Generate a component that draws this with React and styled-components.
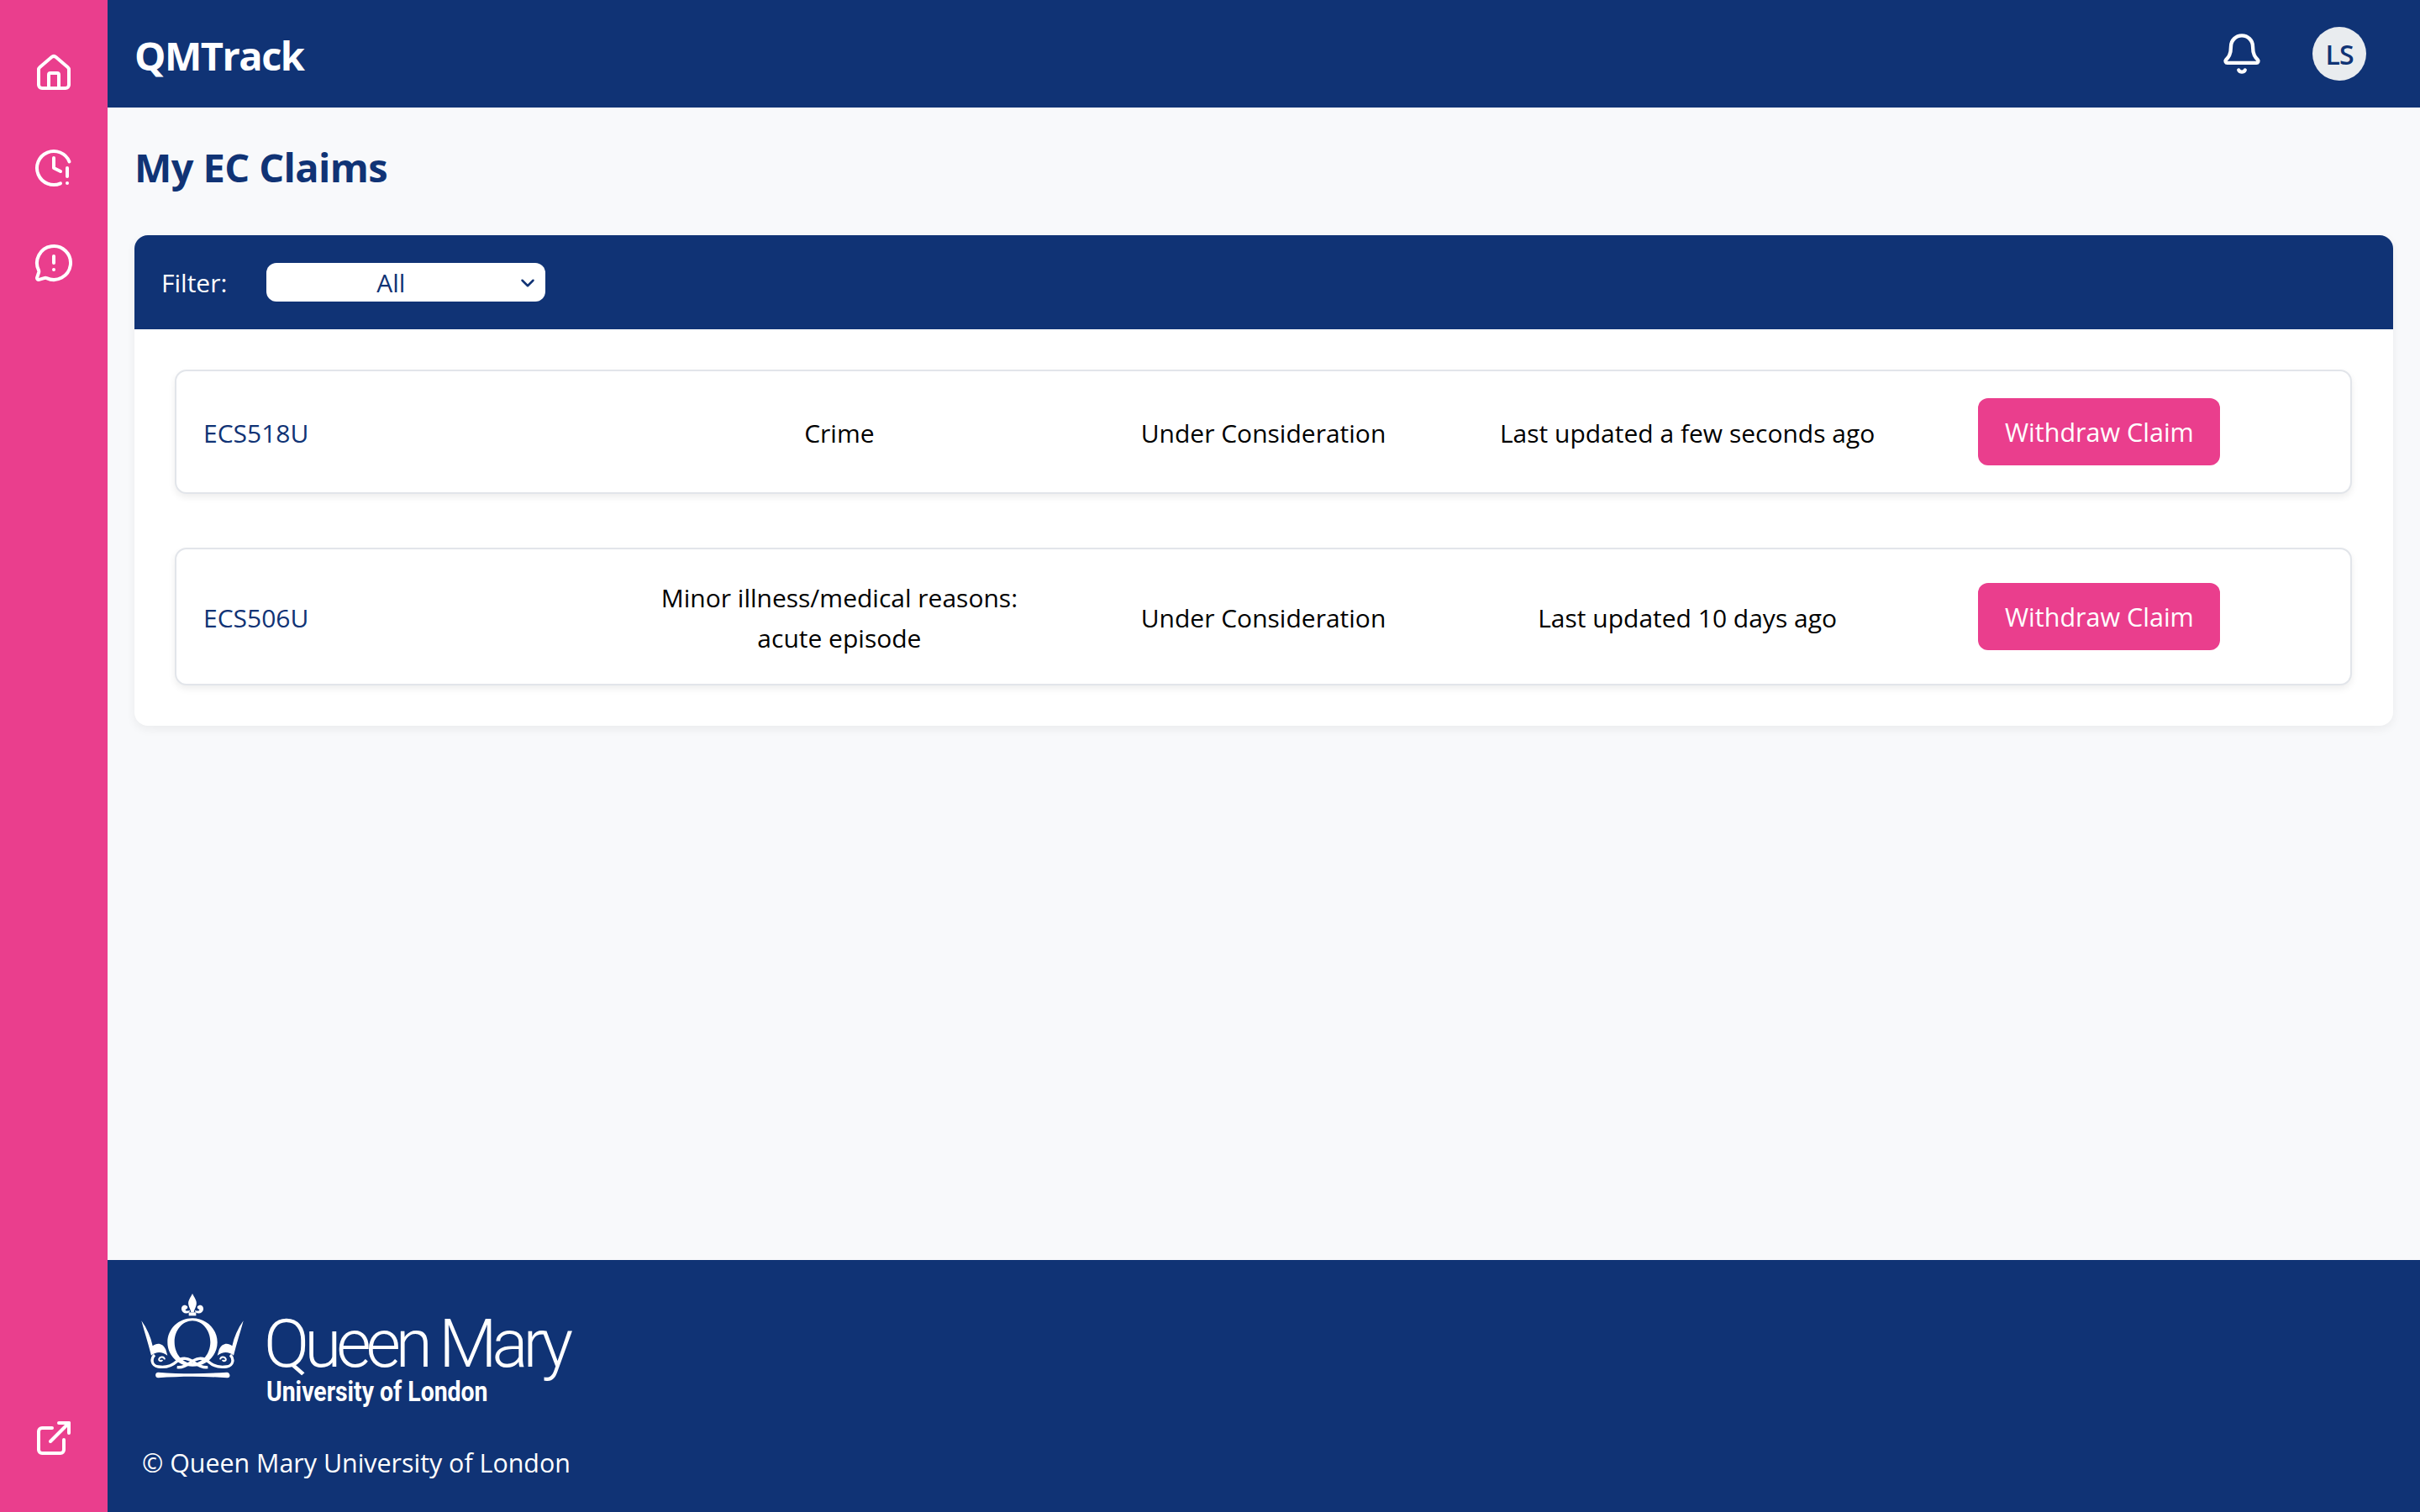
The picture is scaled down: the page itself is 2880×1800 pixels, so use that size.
import React from 'react';
import styled, { createGlobalStyle } from 'styled-components';
import { Bell, ChevronDown, ClockAlert, ExternalLink, House, MessageCircleWarning } from 'lucide-react';

const navy = '#103375';
const pink = '#ea3e8d';
const uiFont = '"Open Sans", "Noto Sans", sans-serif';

const GlobalStyle = createGlobalStyle`
  html, body {
    margin: 0;
    height: 100%;
    background: #f8f9fb;
    font-family: ${uiFont};
  }
  * { box-sizing: border-box; }
`;

const Shell = styled.div`
  display: grid;
  grid-template-columns: 128px 1fr;
  height: 100vh;
`;

const Sidebar = styled.nav`
  display: flex;
  flex-direction: column;
  align-items: center;
  justify-content: space-between;
  padding: 63px 0 64px;
  background: ${pink};
  color: #fff;
`;

const NavGroup = styled.div`
  display: flex;
  flex-direction: column;
  gap: 65px;
`;

const Column = styled.div`
  display: flex;
  flex-direction: column;
  min-width: 0;
`;

const Header = styled.header`
  display: flex;
  align-items: center;
  justify-content: space-between;
  height: 128px;
  padding: 0 64px 0 32px;
  background: ${navy};
  color: #fff;
`;

const Brand = styled.div`
  padding-top: 3px;
  font-size: 47px;
  font-weight: 700;
  letter-spacing: -1.5px;
`;

const HeaderActions = styled.div`
  display: flex;
  align-items: center;
  gap: 58px;
`;

const Avatar = styled.div`
  display: flex;
  align-items: center;
  justify-content: center;
  width: 64px;
  height: 64px;
  border-radius: 50%;
  background: #e9ecef;
  color: ${navy};
  font-size: 32px;
  font-weight: 600;
  letter-spacing: -1px;
`;

const Main = styled.main`
  flex: 1;
  padding: 35px 32px 0;
`;

const Title = styled.h1`
  margin: 0 0 45px;
  color: ${navy};
  font-size: 47px;
  line-height: 72px;
  font-weight: 700;
  letter-spacing: -0.6px;
`;

const Card = styled.section`
  border-radius: 16px;
  background: #fff;
  box-shadow: 0 4px 12px rgba(0, 0, 0, 0.06);
  overflow: hidden;
`;

const FilterBar = styled.div`
  display: flex;
  align-items: center;
  gap: 47px;
  height: 112px;
  padding: 0 32px;
  background: ${navy};
  color: #fff;
  font-size: 30px;
`;

const SelectWrap = styled.div`
  position: relative;
  width: 332px;
  height: 46px;
  color: ${navy};
`;

const Select = styled.select`
  appearance: none;
  width: 100%;
  height: 100%;
  padding: 0 36px 0 0;
  border: 0;
  border-radius: 12px;
  background: #fff;
  color: ${navy};
  font-family: ${uiFont};
  font-size: 30px;
  text-align: center;
`;

const Chevron = styled(ChevronDown)`
  position: absolute;
  top: 11px;
  right: 8px;
  pointer-events: none;
`;

const ClaimList = styled.div`
  display: flex;
  flex-direction: column;
  gap: 64px;
  padding: 48px 49px 48px 48px;
`;

const ClaimRow = styled.article`
  display: grid;
  grid-template-columns: repeat(5, 1fr);
  align-items: center;
  padding: 32px;
  border: 2px solid #e2e5ea;
  border-radius: 14px;
  background: #fff;
  box-shadow: 0 4px 8px rgba(0, 0, 0, 0.07);
  font-size: 30px;
  line-height: 48px;
`;

const Code = styled.div`
  margin-bottom: -2px;
  padding-top: 2px;
  color: ${navy};
`;

const Cell = styled.div`
  margin-bottom: -2px;
  padding: 2px 16px 0;
  color: #000;
  text-align: center;
`;

const WithdrawButton = styled.button`
  width: 288px;
  height: 80px;
  margin-left: 94px;
  padding: 0;
  border: 0;
  border-radius: 12px;
  background: ${pink};
  color: #fff;
  font-family: ${uiFont};
  font-size: 30.5px;
`;

const Footer = styled.footer`
  display: flex;
  flex-direction: column;
  height: 300px;
  padding: 35px 32px 0;
  background: ${navy};
  color: #fff;
`;

const Logo = styled.div`
  display: flex;
  gap: 14px;
  height: 182px;
`;

const Wordmark = styled.div`
  display: flex;
  flex-direction: column;
`;

const WordmarkName = styled.div`
  margin-top: 26px;
  font-family: Roboto, "Liberation Sans", sans-serif;
  font-size: 80px;
  font-weight: 300;
  line-height: 78px;
  letter-spacing: -6px;
  white-space: nowrap;
`;

const WordmarkPlace = styled.div`
  margin: 2px 0 0 3px;
  font-family: Roboto, "Liberation Sans", sans-serif;
  font-size: 33px;
  font-weight: 700;
  line-height: 32px;
  white-space: nowrap;
  transform: scaleX(0.86);
  transform-origin: left center;
`;

const Copyright = styled.div`
  margin: 1px 0 0 9px;
  font-size: 30.4px;
  line-height: 48px;
`;

const CrownSide = () => (
  <>
    <path d="M190 62C180 50 166 58 168 72c2 12 16 18 28 10l2-8c-8 4-16 4-16-2 4-2 8-4 8-10z" />
    <path d="M25 112c20 28 33 58 40 90 15-12 35-12 47 13l6 21c-18-14-40-16-58 0C50 195 35 150 25 112z" />
    <path d="M72 234c-14 14-12 38 13 42 27 4 50-4 65-18 20-18 45-13 65 4 13 10 30 18 47 16" fill="none" stroke="#fff" strokeWidth="10" />
    <path d="M108 250c-2-10-16-12-20-2-2 8 8 10 12 4" fill="none" stroke="#fff" strokeWidth="6" />
  </>
);

const Crown = () => (
  <svg width="140" height="112" viewBox="0 0 420 336" fill="#fff">
    <path d="M207 15c7 15 17 25 14 40-2 11-8 17-9 27h-10c-1-10-7-16-9-27-3-15 7-25 14-40z" />
    <rect x="194" y="82" width="26" height="12" />
    <path
      fillRule="evenodd"
      d="M207 103c49 0 89 38 89 86s-40 86-89 86-89-38-89-86 40-86 89-86zM207 112c-35 0-64 34-64 76s29 76 64 76 64-34 64-76-29-76-64-76z"
    />
    <CrownSide />
    <g transform="matrix(-1 0 0 1 414 0)">
      <CrownSide />
    </g>
    <path d="M85 296c80 6 165 6 245 0 12 0 15 20 2 20-82-6-167-6-247 0-13 0-13-20 0-20z" />
  </svg>
);

const claims = [
  { code: 'ECS518U', reason: 'Crime', updated: 'Last updated a few seconds ago' },
  { code: 'ECS506U', reason: 'Minor illness/medical reasons: acute episode', updated: 'Last updated 10 days ago' },
];

const App = () => {
  return (
    <Shell>
      <GlobalStyle />
      <Sidebar>
        <NavGroup>
          <House size={48} strokeWidth={2} />
          <ClockAlert size={48} strokeWidth={2} />
          <MessageCircleWarning size={48} strokeWidth={2} />
        </NavGroup>
        <ExternalLink size={48} strokeWidth={2} />
      </Sidebar>
      <Column>
        <Header>
          <Brand>QMTrack</Brand>
          <HeaderActions>
            <Bell size={52} strokeWidth={2} />
            <Avatar>LS</Avatar>
          </HeaderActions>
        </Header>
        <Main>
          <Title>My EC Claims</Title>
          <Card>
            <FilterBar>
              Filter:
              <SelectWrap>
                <Select defaultValue="all">
                  <option value="all">All</option>
                </Select>
                <Chevron size={26} strokeWidth={2.3} />
              </SelectWrap>
            </FilterBar>
            <ClaimList>
              {claims.map((claim) => (
                <ClaimRow key={claim.code}>
                  <Code>{claim.code}</Code>
                  <Cell>{claim.reason}</Cell>
                  <Cell>Under Consideration</Cell>
                  <Cell>{claim.updated}</Cell>
                  <WithdrawButton>Withdraw Claim</WithdrawButton>
                </ClaimRow>
              ))}
            </ClaimList>
          </Card>
        </Main>
        <Footer>
          <Logo>
            <Crown />
            <Wordmark>
              <WordmarkName>Queen Mary</WordmarkName>
              <WordmarkPlace>University of London</WordmarkPlace>
            </Wordmark>
          </Logo>
          <Copyright>© Queen Mary University of London</Copyright>
        </Footer>
      </Column>
    </Shell>
  );
};

export default App;
